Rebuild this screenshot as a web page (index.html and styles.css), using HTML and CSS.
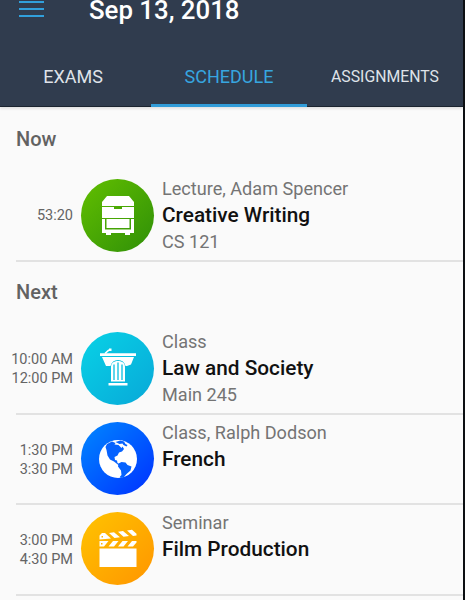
FILE: index.html
```html
<!DOCTYPE html>
<html lang="en">
<head>
    <meta charset="UTF-8">
    <meta name="viewport" content="width=device-width, initial-scale=1.0">
    <title>Schedule</title>
    <link rel="stylesheet" href="styles.css">
</head>
<body>
    <div class="app">
        <header class="header">
            <div class="toolbar">
                <button class="menu-btn" aria-label="Menu">
                    <span class="menu-line"></span>
                    <span class="menu-line"></span>
                    <span class="menu-line"></span>
                </button>
                <h1 class="date">Sep 13, 2018</h1>
            </div>
            <nav class="tabs">
                <a class="tab tab-first">EXAMS</a>
                <a class="tab active">SCHEDULE</a>
                <a class="tab tab-small">ASSIGNMENTS</a>
            </nav>
        </header>

        <main class="content">
            <h2 class="section-title">Now</h2>
            <div class="row">
                <div class="time">53:20</div>
                <div class="badge badge-green">
                    <svg class="icon" viewBox="0 0 40 40">
                        <path fill="#fff" d="M9 1h22l5 6v4H4V7z"/>
                        <path fill="#fff" d="M4 12h12v2h8v-2h12v11H4z"/>
                        <path fill="#fff" fill-rule="evenodd" d="M4 24h32v14h-4v2h-5v-2H13v2H8v-2H4zM7 24v10.500h26V24h-1.500v9h-23v-9z"/>
                    </svg>
                </div>
                <div class="info">
                    <div class="detail">Lecture, Adam Spencer</div>
                    <div class="name">Creative Writing</div>
                    <div class="detail">CS 121</div>
                </div>
            </div>

            <h2 class="section-title">Next</h2>
            <div class="row">
                <div class="time">10:00 AM<br>12:00 PM</div>
                <div class="badge badge-cyan">
                    <svg class="icon" viewBox="0 0 40 40">
                        <path fill="none" stroke="#fff" stroke-width="1.600" d="M7 5.500l3.500-3.200h2"/>
                        <path fill="#fff" d="M11 .5h2.500v2.500H11zM2 5.200h36v2.800H2z"/>
                        <path fill="#fff" d="M4 9h32l-3 7.500-4 1.500h-1.500c-1-4-3.500-6-7.500-6s-6.500 2-7.500 6H8z"/>
                        <path fill="#fff" d="M13 33.500V19c0-3.800 2.500-6 7-6s7 2.200 7 6v14.500z"/>
                        <path class="slot-cyan" d="M16 16.500V32M20 14.500V32M24 16.500V32"/>
                        <path fill="#fff" d="M10.500 35h19v2.500h-19z"/>
                    </svg>
                </div>
                <div class="info">
                    <div class="detail">Class</div>
                    <div class="name">Law and Society</div>
                    <div class="detail">Main 245</div>
                </div>
            </div>
            <div class="row row-short">
                <div class="time">1:30 PM<br>3:30 PM</div>
                <div class="badge badge-blue">
                    <svg class="icon" viewBox="0 0 40 40">
                        <circle cx="20" cy="20" r="19" fill="#fff"/>
                        <path class="land" d="M9 5l5-2.500 3.500 1.500-1 1.500 4 .5 3 3 1-1.500 1.500 2.500-2 2.500-3 1-1.500 3-3 1.500.5 3 2 .5.500 2.500 2.500 1.500-1 1-5-4-4-2-2.500-4-1-5.500-1-3z"/>
                        <path class="land" d="M17.500 3l5-1.500 3.500 1 1.500 2.500 2 1-1 1.500-3-1.500-1-1.500-3 .5z"/>
                        <path class="land" d="M20.500 24.500l3-1.500 4 .5 2 2.500 4 1.500-1 4-4 3.500-3 3.500-3 .5-.5-1.500 1.500-1.500-.5-4.500-3-4z"/>
                    </svg>
                </div>
                <div class="info">
                    <div class="detail">Class, Ralph Dodson</div>
                    <div class="name">French</div>
                </div>
            </div>
            <div class="row">
                <div class="time">3:00 PM<br>4:30 PM</div>
                <div class="badge badge-orange">
                    <svg class="icon" viewBox="0 0 40 40">
                        <path fill="#fff" d="M1.500 19.500h37V38h-37z"/>
                        <path fill="#fff" fill-rule="evenodd" d="M1.500 12h9l-4.500 5.500H1.500zM3 14v1.500h1.500V14zM15 12h5.500L16 17.500h-5.500zM24.500 12H30l-4.500 5.500H20zM34 12h4.500v1.500l-3.500 4h-5.500z"/>
                        <path fill="#fff" fill-rule="evenodd" d="M1.500 6.500L4 4h3l6 5.500-11.500 1zM3.500 7v1.500H5V7zM11 4l5-.7 6 5-5.500.8zM20 2.700l5-.7 6 5-5.500.8zM29 1.500l5-.7 4.500 4v1.700l-3.500.5z"/>
                    </svg>
                </div>
                <div class="info">
                    <div class="detail">Seminar</div>
                    <div class="name">Film Production</div>
                </div>
            </div>
        </main>
    </div>
</body>
</html>
```

FILE: styles.css
```css
* {
    box-sizing: border-box;
}
body {
    margin: 0;
    font-family: Roboto, "Liberation Sans", sans-serif;
    background-color: #fafafa;
}
.app {
    height: 600px;
    border-right: 2px solid #0c0f12;
    overflow: hidden;
}
.header {
    height: 107px;
    background-color: #303c4e;
    box-shadow: 0 2px 2px #e3e3e3;
}
.toolbar {
    display: flex;
    height: 47px;
    padding-left: 19px;
}
.menu-btn {
    display: flex;
    flex-direction: column;
    gap: 5px;
    width: 25px;
    margin: 1px 45px 0 0;
    padding: 0;
    border: none;
    background: none;
}
.menu-line {
    width: 25px;
    height: 2px;
    background-color: #31a0dc;
}
.date {
    margin: 0;
    font-size: 25.8px;
    line-height: 21px;
    font-weight: 500;
    color: #fff;
}
.tabs {
    display: grid;
    grid-template-columns: 151px 156px 156px;
    height: 60px;
}
.tab {
    padding-top: 20px;
    border-bottom: 1px solid #1b2430;
    font-size: 18px;
    line-height: 20px;
    text-align: center;
    color: #dfe3e9;
}
.tab-first {
    padding-right: 5px;
}
.tab.active {
    border-bottom: 3px solid #319cd8;
    color: #37a6e0;
}
.tab-small {
    font-size: 15.8px;
    line-height: 20px;
}
.content {
    padding: 17px 0 0 16px;
}
.section-title {
    height: 30px;
    margin: 0 0 17px;
    font-size: 20px;
    line-height: 30px;
    font-weight: 500;
    color: #626262;
}
.row {
    display: flex;
    height: 91px;
    border-bottom: 2px solid #e2e2e2;
}
.row + .section-title {
    margin-top: 15px;
}
.row-short {
    height: 90px;
}
.time {
    display: flex;
    align-items: center;
    justify-content: flex-end;
    width: 73px;
    height: 73px;
    margin: 8px 8px 0 -16px;
    font-size: 14.5px;
    line-height: 19px;
    text-align: right;
    color: #646464;
}
.badge {
    display: flex;
    align-items: center;
    justify-content: center;
    width: 73px;
    height: 73px;
    margin-top: 7.5px;
    border-radius: 50%;
}
.badge-green {
    background: linear-gradient(135deg, #62bf00, #2f8f08);
}
.badge-cyan {
    background: linear-gradient(135deg, #08d2e6, #08a8d8);
}
.badge-blue {
    margin-top: 7px;
    background: linear-gradient(135deg, #0088ff, #0030ff);
}
.badge-orange {
    margin-top: 7px;
    background: linear-gradient(135deg, #ffc400, #ff9500);
}
.icon {
    width: 40px;
    height: 40px;
}
.slot-cyan {
    fill: none;
    stroke: #08bfe0;
    stroke-width: 1.3;
}
.land {
    fill: #0562ff;
}
.info {
    margin: 5px 0 0 8px;
}
.detail {
    font-size: 18.1px;
    line-height: 26px;
    color: #747474;
}
.name {
    font-size: 20.8px;
    line-height: 27px;
    font-weight: 500;
    color: #111;
}
```
